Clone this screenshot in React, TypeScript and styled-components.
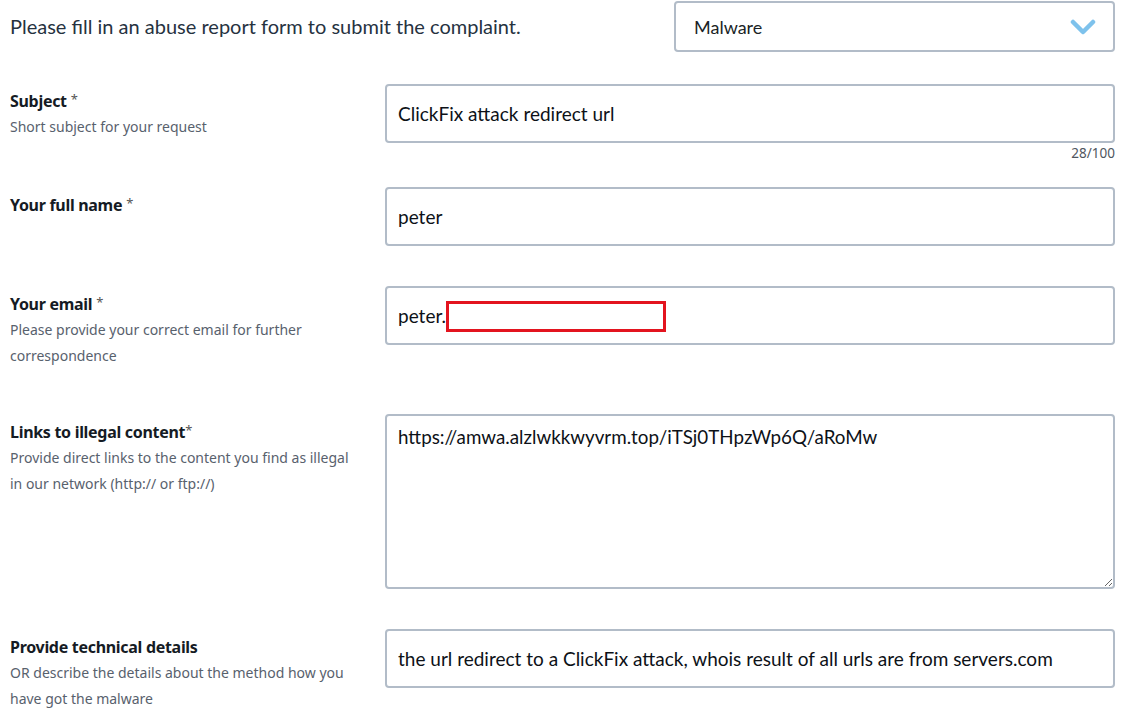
import React from "react";
import styled, { createGlobalStyle } from "styled-components";

const Global = createGlobalStyle`
  html, body { margin: 0; padding: 0; background: #ffffff; }
  body { font-family: Lato, "Open Sans", sans-serif; color: #222; }
  * { box-sizing: border-box; }
`;

const Page = styled.div`
  width: 1142px;
  padding: 0 27px 0 10px;
  display: flex;
  flex-direction: column;
`;

const Header = styled.div`
  display: flex;
  align-items: center;
  justify-content: space-between;
  padding-top: 1px;
`;

const Intro = styled.p`
  margin: 0 0 2px;
  font-family: Lato, sans-serif;
  font-size: 20px;
  color: #26323f;
`;

const SelectBox = styled.div`
  width: 441px;
  height: 51px;
  border: 2px solid #b2bcc8;
  border-radius: 4px;
  display: flex;
  align-items: center;
  justify-content: space-between;
  padding: 0 17px 0 18px;
  font-family: Lato, sans-serif;
  font-size: 18px;
  color: #1a1f26;
`;

const Row = styled.div<{ $top: number }>`
  display: grid;
  grid-template-columns: 375px 1fr;
  margin-top: ${(p) => p.$top}px;
`;

const LabelCol = styled.div<{ $pad: number }>`
  padding-top: ${(p) => p.$pad}px;
  display: flex;
  flex-direction: column;
`;

const Label = styled.div`
  font-family: "Noto Sans", "Open Sans", sans-serif;
  font-weight: 700;
  font-size: 16px;
  letter-spacing: -0.3px;
  line-height: 22px;
  color: #151b24;
`;

const Star = styled.span<{ $tight?: boolean }>`
  font-weight: 400;
  font-size: 13px;
  color: #555;
  margin-left: ${(p) => (p.$tight ? 0 : 4)}px;
  vertical-align: 3px;
`;

const Desc = styled.div`
  font-family: "Noto Sans", "Open Sans", sans-serif;
  font-size: 14px;
  line-height: 25.5px;
  color: #58616d;
  width: 350px;
  margin-top: 2px;
`;

const FieldCol = styled.div`
  display: flex;
  flex-direction: column;
`;

const FieldWrap = styled.div`
  position: relative;
`;

const TextInput = styled.input`
  width: 730px;
  height: 59px;
  border: 2px solid #b2bcc8;
  border-radius: 4px;
  padding: 0 11px;
  font-family: Lato, sans-serif;
  font-size: 19px;
  color: #0d1117;
  outline: none;
  background: #fff;
`;

const TextArea = styled.textarea`
  width: 730px;
  height: 175px;
  border: 2px solid #b2bcc8;
  border-radius: 4px;
  padding: 10px 11px;
  font-family: Lato, sans-serif;
  font-size: 18.8px;
  line-height: 22px;
  color: #0d1117;
  outline: none;
  resize: vertical;
  display: block;
`;

const Counter = styled.div`
  width: 730px;
  text-align: right;
  font-family: "Noto Sans", sans-serif;
  font-size: 13.5px;
  color: #4f5660;
  margin-top: 1px;
`;

const Redact = styled.div`
  position: absolute;
  left: 61px;
  top: 15px;
  width: 220px;
  height: 31px;
  border: 3px solid #e3141f;
  background: transparent;
`;

const Chevron = () => (
  <svg width="26" height="18" viewBox="0 0 26 18">
    <path d="M3 4 L13 14 L23 4" fill="none" stroke="#7ec2ec" strokeWidth="4.5" strokeLinecap="round" strokeLinejoin="round" />
  </svg>
);

export default function App() {
  return (
    <>
      <Global />
      <Page>
        <Header>
          <Intro>Please fill in an abuse report form to submit the complaint.</Intro>
          <SelectBox>
            <span>Malware</span>
            <Chevron />
          </SelectBox>
        </Header>

        <Row $top={32}>
          <LabelCol $pad={4}>
            <Label>
              Subject<Star>*</Star>
            </Label>
            <Desc>Short subject for your request</Desc>
          </LabelCol>
          <FieldCol>
            <TextInput defaultValue="ClickFix attack redirect url" readOnly />
            <Counter>28/100</Counter>
          </FieldCol>
        </Row>

        <Row $top={25}>
          <LabelCol $pad={5}>
            <Label>
              Your full name<Star>*</Star>
            </Label>
          </LabelCol>
          <FieldCol>
            <TextInput defaultValue="peter" readOnly />
          </FieldCol>
        </Row>

        <Row $top={40}>
          <LabelCol $pad={5}>
            <Label>
              Your email<Star>*</Star>
            </Label>
            <Desc>Please provide your correct email for further correspondence</Desc>
          </LabelCol>
          <FieldCol>
            <FieldWrap>
              <TextInput defaultValue="peter." readOnly />
              <Redact />
            </FieldWrap>
          </FieldCol>
        </Row>

        <Row $top={46}>
          <LabelCol $pad={5}>
            <Label>
              Links to illegal content<Star $tight>*</Star>
            </Label>
            <Desc>Provide direct links to the content you find as illegal in our network (http:// or ftp://)</Desc>
          </LabelCol>
          <FieldCol>
            <TextArea defaultValue="https://amwa.alzlwkkwyvrm.top/iTSj0THpzWp6Q/aRoMw" readOnly />
          </FieldCol>
        </Row>

        <Row $top={40}>
          <LabelCol $pad={7}>
            <Label>Provide technical details</Label>
            <Desc>OR describe the details about the method how you have got the malware</Desc>
          </LabelCol>
          <FieldCol>
            <TextInput
              defaultValue="the url redirect to a ClickFix attack, whois result of all urls are from servers.com"
              readOnly
            />
          </FieldCol>
        </Row>
      </Page>
    </>
  );
}
